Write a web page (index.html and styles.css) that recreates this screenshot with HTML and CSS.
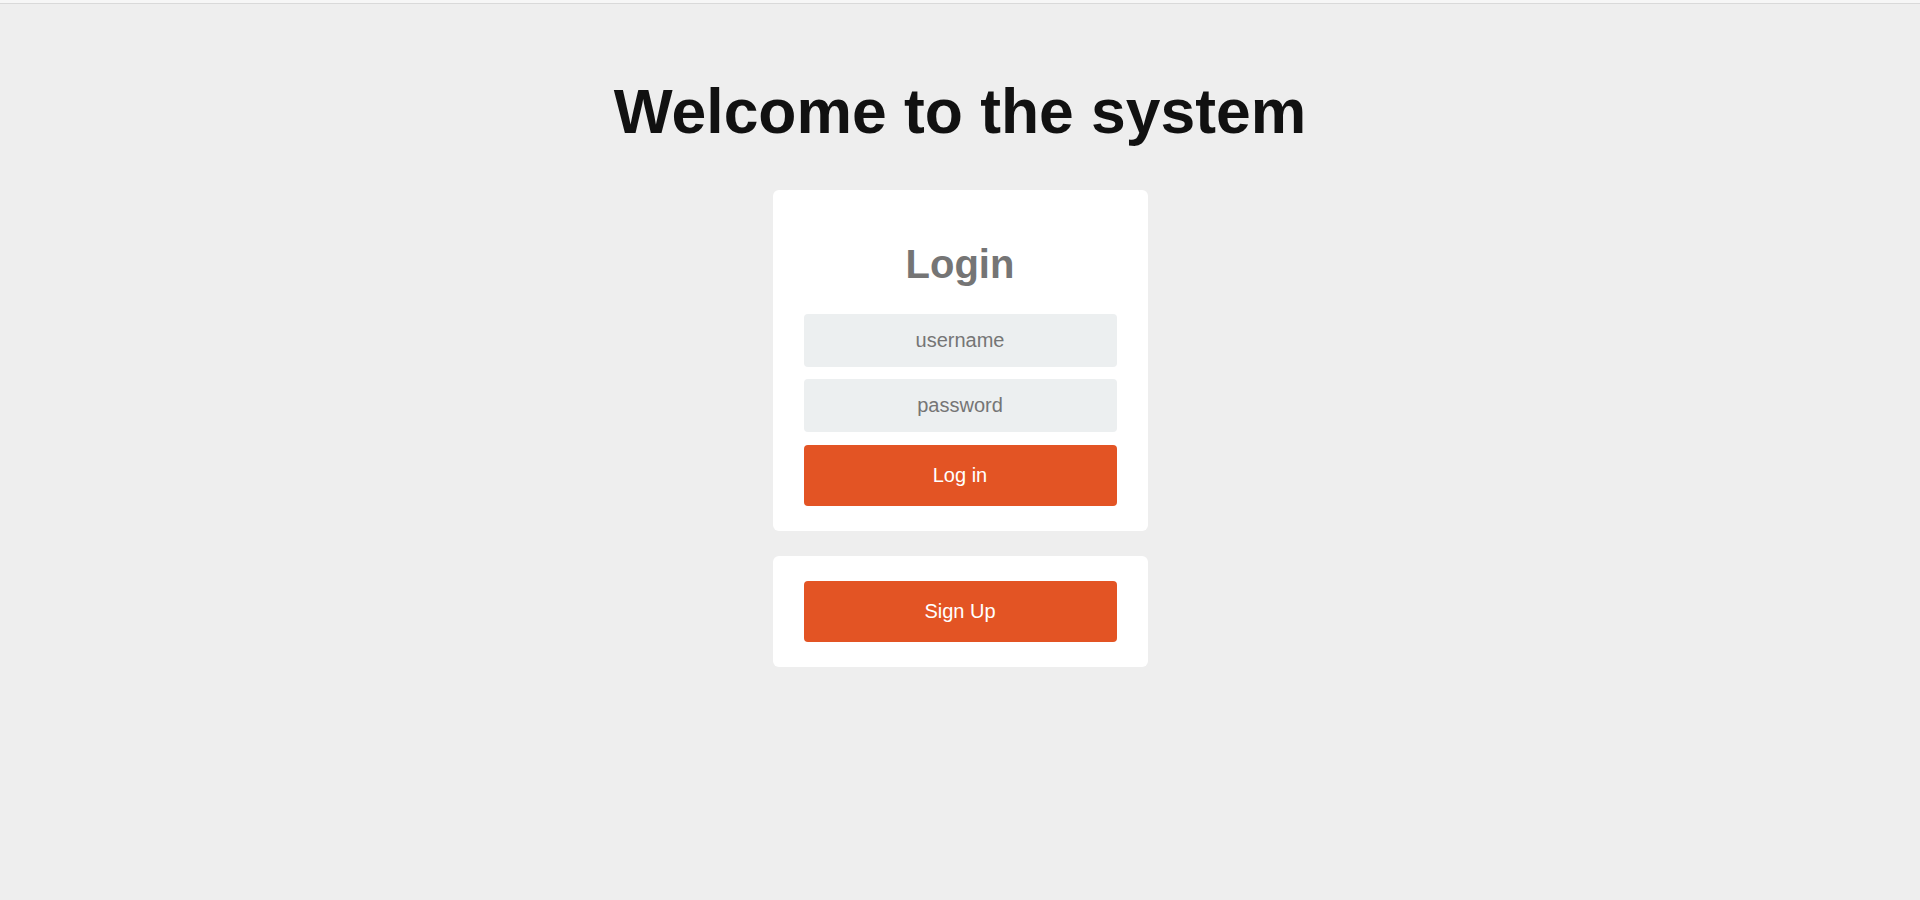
FILE: index.html
```html
<!DOCTYPE html>
<html lang="en">
<head>
<meta charset="utf-8">
<title>Welcome</title>
<link rel="stylesheet" href="styles.css">
</head>
<body>
<div class="topbar"></div>
<main class="page">
  <h1 class="title">Welcome to the system</h1>
  <form class="card login-card">
    <h2 class="card-title">Login</h2>
    <input class="field" type="text" placeholder="username">
    <input class="field" type="password" placeholder="password">
    <button class="btn" type="button">Log in</button>
  </form>
  <div class="card signup-card">
    <button class="btn" type="button">Sign Up</button>
  </div>
</main>
</body>
</html>
```

FILE: styles.css
```css
* { box-sizing: border-box; }
html, body {
  margin: 0;
  padding: 0;
  height: 100%;
}
body {
  background: #eeeeee;
  font-family: "Liberation Sans", Arial, sans-serif;
  color: #111;
}
.topbar {
  height: 4px;
  background: #f6f6f6;
  border-bottom: 1px solid #d9d9d9;
}
.page {
  display: flex;
  flex-direction: column;
  align-items: center;
}
.title {
  margin: 72px 0 43px;
  font-size: 62.4px;
  font-weight: bold;
  color: #111;
  line-height: 71px;
}
.card {
  width: 375px;
  background: #fff;
  border-radius: 6px;
  padding: 25px 31px;
  display: flex;
  flex-direction: column;
}
.card-title {
  margin: 25px 0 26px;
  text-align: center;
  font-size: 40px;
  line-height: 48px;
  font-weight: bold;
  color: #757575;
}
.field {
  height: 53px;
  width: 100%;
  border: none;
  border-radius: 4px;
  background: #eceff0;
  font-family: "Liberation Sans", Arial, sans-serif;
  font-size: 20px;
  text-align: center;
  color: #333;
  margin-bottom: 12px;
  outline: none;
}
.field::placeholder {
  color: #757575;
}
.field + .btn { margin-top: 1px; }
.btn {
  height: 61px;
  width: 100%;
  border: none;
  border-radius: 4px;
  background: #e35424;
  color: #fff;
  font-family: "Liberation Sans", Arial, sans-serif;
  font-size: 20px;
  cursor: pointer;
}
.signup-card {
  margin-top: 25px;
}
```
